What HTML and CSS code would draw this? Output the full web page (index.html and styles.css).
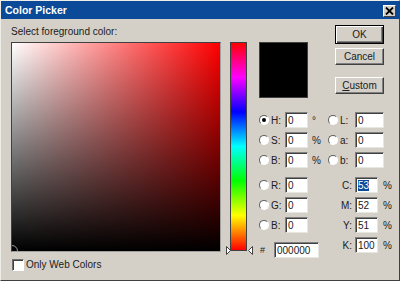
FILE: index.html
```html
<!DOCTYPE html>
<html lang="en">
<head>
    <meta charset="UTF-8">
    <title>Color Picker</title>
    <link rel="stylesheet" href="styles.css">
</head>
<body>
    <div class="window">
        <div class="titlebar">
            <span class="title">Color Picker</span>
            <span class="close">
                <svg width="9" height="8" viewBox="0 0 9 8"><path d="M1 0.5 L8 7.5 M8 0.5 L1 7.5" stroke="#000" stroke-width="1.8"/></svg>
            </span>
        </div>

        <div class="content">
            <div class="picker">
                <div class="prompt">Select foreground color:</div>
                <div class="field"><span class="marker"></span></div>
                <div class="webonly"><span class="checkbox"></span>Only Web Colors</div>
            </div>

            <div class="hue-col">
                <div class="hue"></div>
                <svg class="hue-arrows" width="27" height="9" viewBox="0 0 27 9">
                    <path d="M0.5 0.5 L4.5 4.5 L0.5 8.5 Z" fill="#fff" stroke="#404040"/>
                    <path d="M26.5 0.5 L22.5 4.5 L26.5 8.5 Z" fill="#fff" stroke="#404040"/>
                </svg>
            </div>

            <div class="panel">
                <div class="panel-top">
                    <div class="swatch"></div>
                    <div class="buttons">
                        <span class="btn default">OK</span>
                        <span class="btn">Cancel</span>
                        <span class="btn custom"><u>C</u>ustom</span>
                    </div>
                </div>

                <div class="fields">
                    <div class="col-left">
                        <div class="group">
                            <div class="row"><span class="radio checked"></span><span class="lbl">H:</span><span class="input">0</span><span class="unit">°</span></div>
                            <div class="row"><span class="radio"></span><span class="lbl">S:</span><span class="input">0</span><span class="unit">%</span></div>
                            <div class="row"><span class="radio"></span><span class="lbl">B:</span><span class="input">0</span><span class="unit">%</span></div>
                        </div>
                        <div class="group">
                            <div class="row"><span class="radio"></span><span class="lbl">R:</span><span class="input">0</span></div>
                            <div class="row"><span class="radio"></span><span class="lbl">G:</span><span class="input">0</span></div>
                            <div class="row"><span class="radio"></span><span class="lbl">B:</span><span class="input">0</span></div>
                        </div>
                        <div class="row hex-row"><span class="hash">#</span><span class="input hex">000000</span></div>
                    </div>

                    <div class="col-right">
                        <div class="group">
                            <div class="row"><span class="radio"></span><span class="lbl">L:</span><span class="input wide">0</span></div>
                            <div class="row"><span class="radio"></span><span class="lbl">a:</span><span class="input wide">0</span></div>
                            <div class="row"><span class="radio"></span><span class="lbl">b:</span><span class="input wide">0</span></div>
                        </div>
                        <div class="group">
                            <div class="row"><span class="cmyk-lbl">C:</span><span class="input"><span class="selected">53</span></span><span class="unit">%</span></div>
                            <div class="row"><span class="cmyk-lbl">M:</span><span class="input">52</span><span class="unit">%</span></div>
                            <div class="row"><span class="cmyk-lbl">Y:</span><span class="input">51</span><span class="unit">%</span></div>
                            <div class="row"><span class="cmyk-lbl">K:</span><span class="input">100</span><span class="unit">%</span></div>
                        </div>
                    </div>
                </div>
            </div>
        </div>
    </div>
</body>
</html>
```

FILE: styles.css
```css
body {
    margin: 0;
    font-family: "Liberation Sans", Arial, sans-serif;
    font-size: 10px;
    color: #000;
    background: #d4d0c8;
}
.window {
    width: 400px;
    height: 281px;
    box-sizing: border-box;
    border: 1px solid;
    border-color: #eeece6 #404040 #404040 #eeece6;
    background: #d4d0c8;
}
.titlebar {
    height: 18px;
    background: #0b4a98;
    display: flex;
    align-items: center;
    justify-content: space-between;
    padding: 0 3px 0 4px;
}
.title {
    color: #fff;
    font-weight: bold;
    font-size: 10.5px;
}
.close {
    width: 13px;
    height: 12px;
    box-sizing: border-box;
    background: #d4d0c8;
    border: 1px solid;
    border-color: #fff #404040 #404040 #fff;
    display: flex;
    align-items: center;
    justify-content: center;
    margin-top: 1px;
}
.content {
    display: flex;
    align-items: flex-start;
}

/* left: saturation / brightness field */
.picker {
    margin-left: 10px;
    padding-top: 6px;
}
.prompt {
    line-height: 13px;
    color: #202020;
}
.field {
    position: relative;
    overflow: hidden;
    margin-top: 4px;
    width: 210px;
    height: 210px;
    box-sizing: border-box;
    border: 1px solid;
    border-color: #404040 #a0a0a0 #a0a0a0 #404040;
    background: linear-gradient(to top, #000, rgba(0, 0, 0, 0)),
                linear-gradient(to right, #fff, #f00);
}
.marker {
    position: absolute;
    left: -6px;
    bottom: -6px;
    width: 10px;
    height: 10px;
    border: 1px solid #9a9a9a;
    border-radius: 50%;
}
.webonly {
    display: flex;
    align-items: center;
    margin-top: 6px;
    margin-left: 1px;
    line-height: 13px;
    color: #202020;
}
.checkbox {
    width: 12px;
    height: 12px;
    box-sizing: border-box;
    margin-right: 2px;
    background: #fff;
    border: 1px solid;
    border-color: #707070 #fff #fff #707070;
    box-shadow: inset 1px 1px #404040;
}

/* hue slider */
.hue-col {
    position: relative;
    margin-left: 9px;
    margin-top: 23px;
}
.hue {
    width: 17px;
    height: 209px;
    box-sizing: border-box;
    border: 1px solid #404040;
    background: linear-gradient(to bottom, #f00, #f0f 16.6%, #00f 33.3%, #0ff 50%, #0f0 66.6%, #ff0 83.3%, #f00);
}
.hue-arrows {
    position: absolute;
    left: -4px;
    top: 204px;
}

/* right panel */
.panel {
    margin-left: 12px;
}
.panel-top {
    display: flex;
    align-items: flex-start;
}
.swatch {
    margin-top: 23px;
    width: 49px;
    height: 56px;
    box-sizing: border-box;
    background: #000;
    border: 1px solid #404040;
}
.buttons {
    margin-left: 27px;
    margin-top: 6px;
    display: flex;
    flex-direction: column;
    gap: 4px;
}
.btn {
    width: 49px;
    height: 17px;
    box-sizing: border-box;
    display: flex;
    align-items: center;
    justify-content: center;
    border: 1px solid;
    border-color: #fff #404040 #404040 #fff;
    box-shadow: inset -1px -1px #808080;
    color: #202020;
}
.btn.default {
    height: 19px;
    border: 1px solid #000;
    box-shadow: inset 1px 1px #fff, inset -1px -1px #404040, inset -2px -2px #808080;
}
.btn.custom {
    margin-top: 8px;
}

/* numeric fields */
.fields {
    display: flex;
    margin-top: 14px;
    color: #202020;
}
.col-left {
    width: 69px;
}
.group {
    display: flex;
    flex-direction: column;
    gap: 4px;
    margin-bottom: 9px;
}
.row {
    display: flex;
    align-items: center;
    height: 16px;
}
.radio {
    width: 10px;
    height: 10px;
    box-sizing: border-box;
    border-radius: 50%;
    background: #fff;
    border: 1px solid;
    border-color: #606060 #fff #fff #606060;
    position: relative;
}
.radio.checked::after {
    content: "";
    position: absolute;
    left: 2px;
    top: 2px;
    width: 4px;
    height: 4px;
    border-radius: 50%;
    background: #000;
}
.lbl {
    width: 14px;
    margin-left: 2px;
}
.col-right .lbl {
    width: 15px;
}
.input {
    width: 23px;
    height: 16px;
    box-sizing: border-box;
    background: #fff;
    border: 1px solid;
    border-color: #808080 #e8e6e0 #e8e6e0 #808080;
    box-shadow: inset 1px 1px #404040;
    padding: 1px 0 0 2px;
    line-height: 13px;
}
.input.wide {
    width: 29px;
}
.unit {
    margin-left: 4px;
}
.cmyk-lbl {
    width: 24px;
    padding-right: 3px;
    text-align: right;
}
.col-right .unit {
    margin-left: 5px;
}
.selected {
    background: #0b4a98;
    color: #fff;
}
.hex-row {
    margin-top: 1px;
}
.hash {
    width: 14px;
    padding-left: 1px;
    font-size: 9px;
}
.input.hex {
    width: 45px;
}
```
